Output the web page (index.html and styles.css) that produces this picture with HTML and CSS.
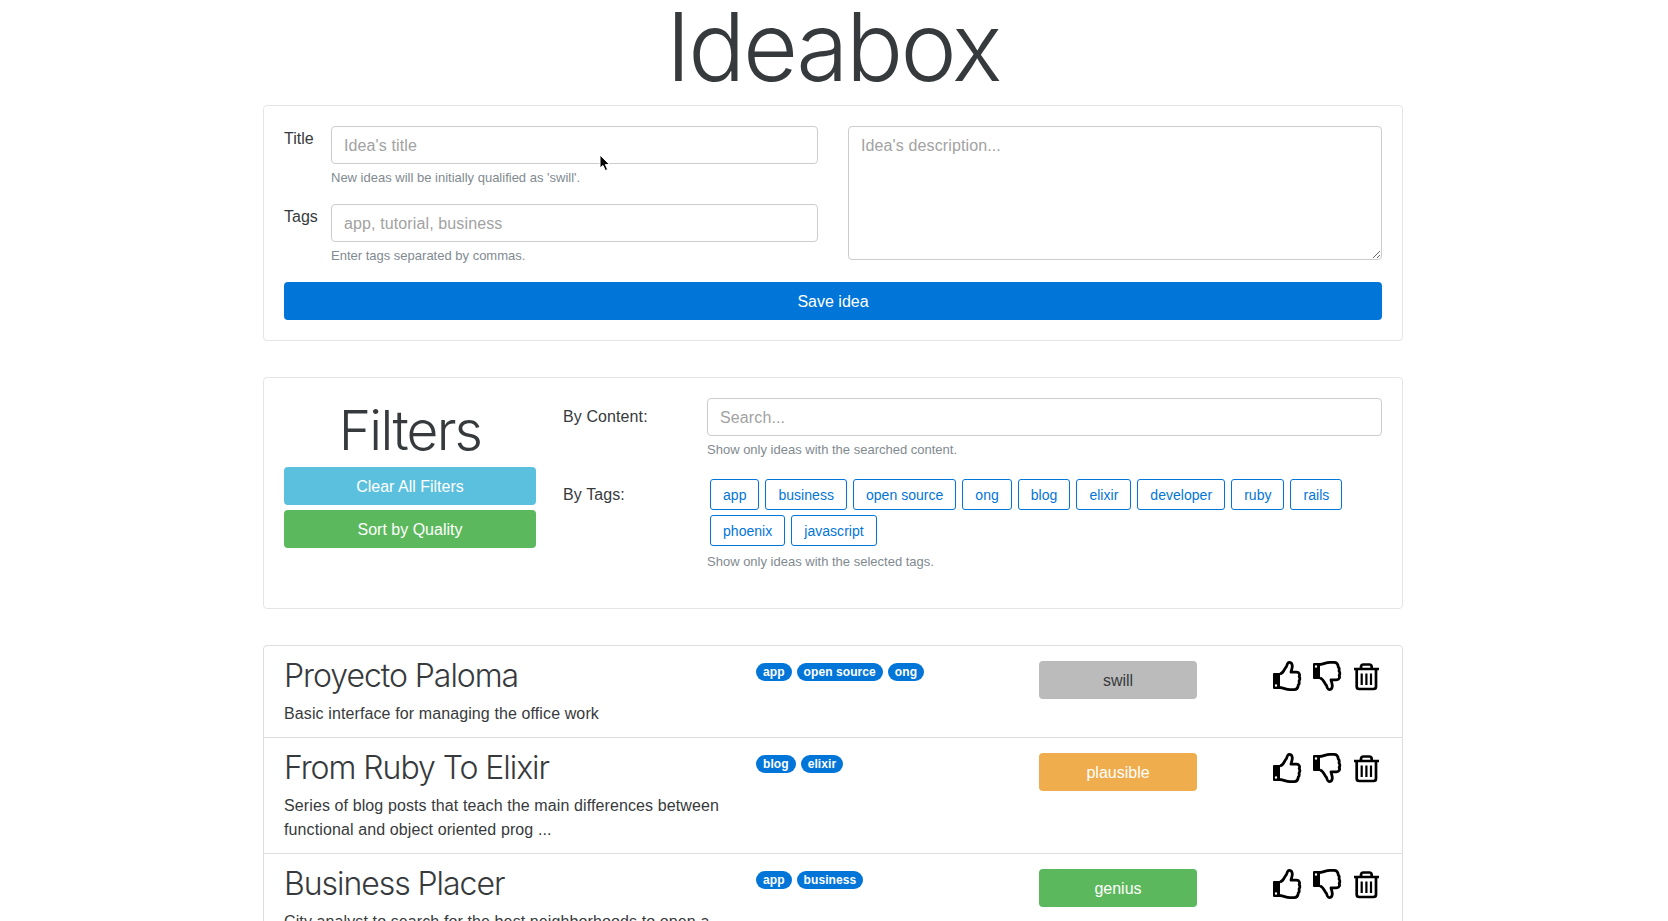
FILE: index.html
```html
<!DOCTYPE html>
<html lang="en">
<head>
<meta charset="utf-8">
<title>Ideabox</title>
<link rel="stylesheet" href="styles.css">
</head>
<body>
<svg class="sprite" width="0" height="0" aria-hidden="true">
  <symbol id="up" viewBox="0 0 30 32">
    <path d="M8 14C12 13 12 9 14.500 6.500C15.300 3.500 15.700 2.400 17.300 2.400C20.300 2.400 20.800 6 19.800 9L19 12.200H24.500C27.500 12.200 28 15 27.200 16.500C28 18 27.800 20 27 21C27.500 23 27 24.500 26.300 25C26 28 25 29.700 22 29.700H18C14 29.500 12 28 8 27.500" fill="none" stroke="#000" stroke-width="2.800" stroke-linejoin="round"/>
    <path fill-rule="evenodd" d="M2 13H8V29H2Q1 29 1 28V14Q1 13 2 13ZM4 24.300A1.200 1.200 0 1 0 4 26.700A1.200 1.200 0 1 0 4 24.300Z"/>
  </symbol>
  <symbol id="trash" viewBox="0 0 30 32">
    <path d="M2 9H27M4.700 9V26.500Q4.700 29 7.200 29H21.500Q24 29 24 26.500V9M9 9V7Q9 4.500 11.500 4.500H17.200Q19.700 4.500 19.700 7V9" fill="none" stroke="#000" stroke-width="2.700"/>
    <path d="M9.700 13.500V25M14.400 13.500V25M19 13.500V25" fill="none" stroke="#000" stroke-width="2.200"/>
  </symbol>
</svg>
<main class="container">
  <h1 class="title"><span>Ideabox</span></h1>
  <form class="card idea-form">
    <div class="idea-cols">
      <div class="idea-left">
        <div class="group"><label for="t">Title</label><div class="field"><input id="t" class="control" placeholder="Idea's title"><small>New ideas will be initially qualified as 'swill'.</small></div></div>
        <div class="group"><label for="g">Tags</label><div class="field"><input id="g" class="control" placeholder="app, tutorial, business"><small>Enter tags separated by commas.</small></div></div>
      </div>
      <textarea class="control desc" placeholder="Idea's description..."></textarea>
    </div>
    <button type="button" class="btn blue">Save idea</button>
  </form>
  <section class="card filters">
    <div class="filter-actions">
      <h2>Filters</h2>
      <button class="btn info">Clear All Filters</button>
      <button class="btn green">Sort by Quality</button>
    </div>
    <div class="filter-fields">
      <div class="group"><label for="s">By Content:</label><div class="field"><input id="s" class="control" placeholder="Search..."><small>Show only ideas with the searched content.</small></div></div>
      <div class="group"><label>By Tags:</label><div class="field">
        <div class="tags"><button>app</button><button>business</button><button>open source</button><button>ong</button><button>blog</button><button>elixir</button><button>developer</button><button>ruby</button><button>rails</button><button>phoenix</button><button>javascript</button></div>
        <small>Show only ideas with the selected tags.</small></div></div>
    </div>
  </section>
  <ul class="list">
    <li><div class="idea"><h3>Proyecto Paloma</h3><p>Basic interface for managing the office work</p></div>
      <div class="badges"><span>app</span><span>open source</span><span>ong</span></div>
      <button class="btn quality gray">swill</button>
      <div class="icons"><svg class="up"><use href="#up"/></svg><svg class="down"><use href="#up"/></svg><svg class="trash"><use href="#trash"/></svg></div></li>
    <li><div class="idea"><h3>From Ruby To Elixir</h3><p>Series of blog posts that teach the main differences between functional and object oriented prog ...</p></div>
      <div class="badges"><span>blog</span><span>elixir</span></div>
      <button class="btn quality orange">plausible</button>
      <div class="icons"><svg class="up"><use href="#up"/></svg><svg class="down"><use href="#up"/></svg><svg class="trash"><use href="#trash"/></svg></div></li>
    <li><div class="idea"><h3>Business Placer</h3><p>City analyst to search for the best neighborhoods to open a</p></div>
      <div class="badges"><span>app</span><span>business</span></div>
      <button class="btn quality green">genius</button>
      <div class="icons"><svg class="up"><use href="#up"/></svg><svg class="down"><use href="#up"/></svg><svg class="trash"><use href="#trash"/></svg></div></li>
  </ul>
</main>
<svg class="cursor" viewBox="0 0 12 18"><path d="M1 1V14L4 11.500L6.300 16.500L8.600 15.500L6.400 10.600H10.500Z" fill="#000" stroke="#fff"/></svg>
</body>
</html>
```
FILE: styles.css
```css
* { box-sizing: border-box; }
html, body { height: 100%; overflow: hidden; }
body { margin: 0; background: #fff; color: #373a3c; font: 16px/24px "Liberation Sans", Arial, sans-serif; }
.sprite { display: none; }
.container { width: 1140px; margin: 0 0 0 263px; }
h1, h2, h3, p { margin: 0; }
h1, h2, h3 { font-family: Inter, "Liberation Sans", sans-serif; font-weight: 300; }
.title { height: 105px; font-size: 95px; line-height: 94px; text-align: center; letter-spacing: -2.6px; }
.card { border: 1px solid #e5e5e5; border-radius: 4px; padding: 20px; margin-bottom: 36px; }
.idea-form { height: 236px; }
.idea-cols { display: flex; gap: 30px; height: 156px; }
.idea-left { width: 534px; }
.group { display: flex; height: 78px; }
.idea-left label { width: 47px; padding-top: 1px; }
.field { flex: 1; }
.control { display: block; width: 100%; height: 38px; padding: 8px 12px 6px; border: 1px solid #ccc; border-radius: 4px; background: #fff; font: inherit; letter-spacing: .12px; outline: 0; }
.control::placeholder { color: #a2a2a2; opacity: 1; }
.desc { flex: 1; height: 134px; padding-top: 7px; resize: vertical; }
small { display: block; margin-top: 4px; font-size: 13px; line-height: 20px; color: #818a91; }
.btn { display: block; width: 100%; height: 38px; padding: 2px 0 0; border: 0; border-radius: 4px; color: #fff; font: inherit; }
.blue { background: #0275d8; }
.info { background: #5bc0de; }
.green { background: #5cb85c; }
.orange { background: #f0ad4e; }
.gray { background: #bbb; color: #373a3c; }
.filters { display: flex; gap: 27px; height: 232px; }
.filter-actions { width: 252px; }
h2 { height: 69px; font-size: 55px; line-height: 64px; text-align: center; letter-spacing: -1.8px; }
.filter-actions .btn + .btn { margin-top: 5px; }
.filter-fields { flex: 1; }
.filter-fields label { width: 144px; padding-top: 7px; letter-spacing: .1px; }
.tags { display: flex; flex-wrap: wrap; gap: 5px 6px; padding: 3px 0 0 3px; }
.tags + small { margin-top: 6px; }
.tags button { height: 31px; padding: 0 12px; border: 1px solid #0275d8; border-radius: 3px; background: #fff; color: #0275d8; font: 14px "Liberation Sans", Arial, sans-serif; letter-spacing: .03px; }
.list { margin: 0; padding: 0; list-style: none; border: 1px solid #ddd; border-radius: 4px 4px 0 0; }
.list li { display: flex; padding: 12px 20px; border-bottom: 1px solid #ddd; }
.idea { width: 472px; padding-right: 30px; }
.idea p { position: relative; top: 1px; letter-spacing: .11px; }
h3 { height: 43px; font-size: 32px; line-height: 36px; letter-spacing: -1.05px; }
.badges { display: flex; align-items: flex-start; gap: 5px; width: 283px; padding-top: 5px; }
.badges span { height: 18px; padding: 0 7px; border-radius: 9px; background: #0275d8; color: #fff; font-size: 12px; font-weight: 700; line-height: 18px; letter-spacing: .08px; }
.quality { width: 158px; margin-top: 3px; }
.icons { display: flex; gap: 10px; margin: 2px 0 0 75px; }
.icons svg { width: 30px; height: 32px; }
.down { transform: scaleY(-1); }
.cursor { position: absolute; left: 599px; top: 154px; width: 12px; height: 18px; }
```
